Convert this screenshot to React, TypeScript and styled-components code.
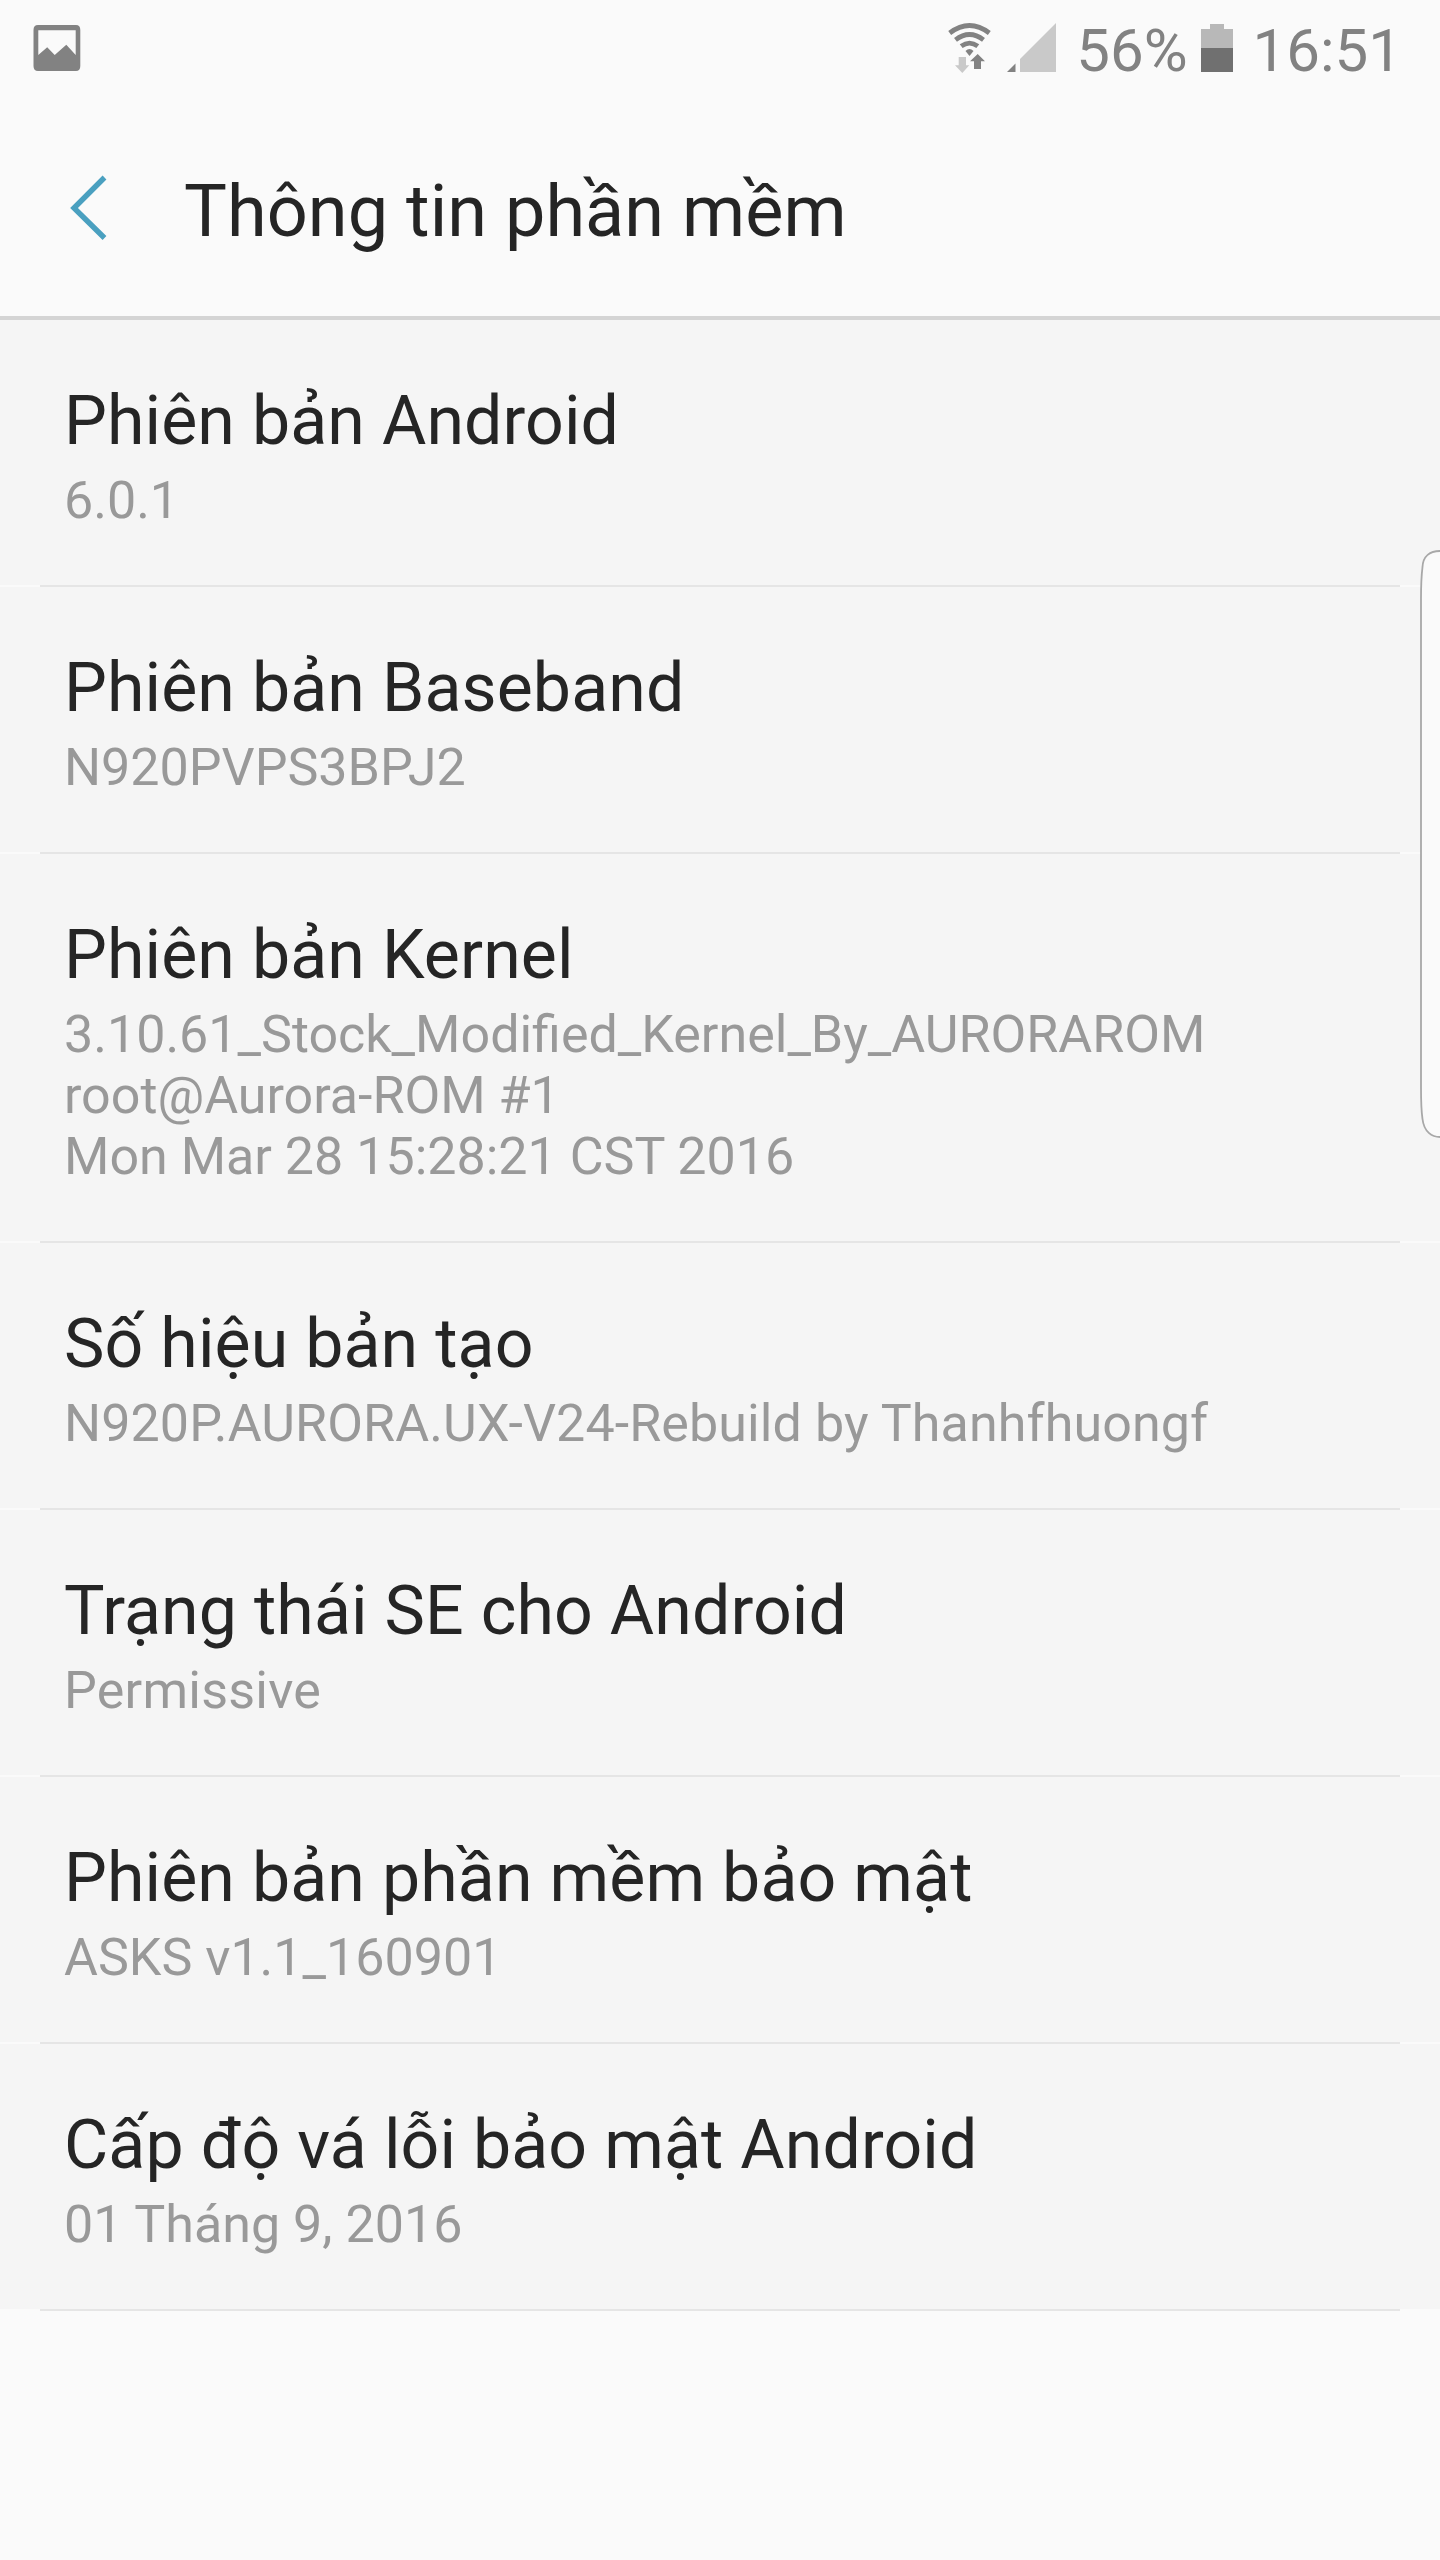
import React from 'react';
import styled, { createGlobalStyle } from 'styled-components';

const GlobalStyle = createGlobalStyle`
  body { margin: 0; background: #fafafa; font-family: Roboto, sans-serif; }
`;

const Screen = styled.div`
  position: relative;
  display: flex;
  flex-direction: column;
  width: 1440px;
  height: 2560px;
  background: #fafafa;
  overflow: hidden;
`;

const StatusBar = styled.header`
  display: flex;
  align-items: flex-start;
  justify-content: space-between;
  height: 96px;
  padding: 0 38px 0 33px;
  box-sizing: border-box;
`;

const StatusGroup = styled.div`
  display: flex;
  align-items: flex-start;
`;

const StatusIcon = styled.svg<{ $top: number; $left?: number }>`
  display: block;
  flex: none;
  margin-top: ${(p) => p.$top}px;
  margin-left: ${(p) => p.$left ?? 0}px;
`;

const StatusText = styled.span<{ $left: number }>`
  margin: 15px 0 0 ${(p) => p.$left}px;
  color: #828282;
  font-size: 60px;
  line-height: 71px;
  white-space: nowrap;
`;

const ActionBar = styled.nav`
  display: flex;
  align-items: flex-start;
  height: 224px;
  box-sizing: border-box;
  border-bottom: 4px solid #d4d4d4;
  padding-left: 70px;
`;

const BackButton = styled.button`
  display: block;
  margin: 79px 0 0;
  padding: 0;
  border: 0;
  background: none;
  line-height: 0;
`;

const PageTitle = styled.h1`
  margin: 73px 0 0 77px;
  color: #252525;
  font-size: 72px;
  font-weight: 400;
  line-height: 85px;
  letter-spacing: 0.05px;
  white-space: nowrap;
`;

const List = styled.main`
  display: flex;
  flex-direction: column;
`;

const Row = styled.section`
  padding: 61px 64px 54px;
  background: #f5f5f5;
`;

const Divider = styled.div`
  height: 2px;
  margin: 0 40px;
  background: #e5e5e5;
`;

const RowTitle = styled.h2`
  margin: 0;
  color: #252525;
  font-size: 68px;
  font-weight: 400;
  line-height: 80px;
  letter-spacing: 0.1px;
  white-space: nowrap;
`;

const RowValue = styled.p<{ $tracking?: number }>`
  margin: 9px 0 0;
  color: #999;
  font-size: 52px;
  line-height: 61px;
  letter-spacing: ${(p) => (p.$tracking ? `${p.$tracking}px` : 'normal')};
  white-space: pre;
`;

const EdgeHandle = styled.svg`
  position: absolute;
  top: 549px;
  right: 0;
`;

interface Item {
  title: string;
  value: string;
  tracking?: number;
}

const items: Item[] = [
  { title: 'Phiên bản Android', value: '6.0.1' },
  { title: 'Phiên bản Baseband', value: 'N920PVPS3BPJ2' },
  {
    title: 'Phiên bản Kernel',
    value: '3.10.61_Stock_Modified_Kernel_By_AURORAROM\nroot@Aurora-ROM #1\nMon Mar 28 15:28:21 CST 2016',
  },
  { title: 'Số hiệu bản tạo', value: 'N920P.AURORA.UX-V24-Rebuild by Thanhfhuongf', tracking: 0.1 },
  { title: 'Trạng thái SE cho Android', value: 'Permissive', tracking: 0.25 },
  { title: 'Phiên bản phần mềm bảo mật', value: 'ASKS v1.1_160901' },
  { title: 'Cấp độ vá lỗi bảo mật Android', value: '01 Tháng 9, 2016' },
];

const PictureIcon = () => (
  <StatusIcon $top={25} width="48" height="46" viewBox="0 0 48 46">
    <path
      fill="#828282"
      fillRule="evenodd"
      d="M5 0H43Q47.300 0 47.300 5V41Q47.300 46 43 46H5Q.5 46 .5 41V5Q.5 0 5 0ZM5.300 5.300V30L14.200 22.300L21.700 30L33.300 19.700L42.700 30V5.300Z"
    />
  </StatusIcon>
);

const WifiIcon = () => (
  <StatusIcon $top={22} width="44" height="52" viewBox="0 0 44 52">
    <g fill="none" stroke="#828282" strokeWidth="4.800">
      <path d="M1.700 11Q21.500-4 41.300 11" />
      <path d="M7.500 17.800Q21.500 7.200 35.500 17.800" />
      <path d="M13.200 24.200Q21.500 18 29.800 24.200" />
    </g>
    <path fill="#828282" d="M17.500 29Q21.500 25.200 25.500 29L21.500 34Z" />
    <path fill="#c9c9c9" d="M10.700 35H18V43.300H21.300L14.300 51L7 43.300H10.700Z" />
    <path fill="#828282" d="M29.700 32L37 39.300H33V47H26V39.300H22Z" />
  </StatusIcon>
);

const SignalIcon = () => (
  <StatusIcon $top={23} $left={15} width="49" height="49" viewBox="0 0 49 49">
    <path fill="#828282" d="M0 49L8.500 40.500V49Z" />
    <path fill="#c9c9c9" d="M13 49V36L49 0V49Z" />
  </StatusIcon>
);

const BatteryIcon = () => (
  <StatusIcon $top={24} $left={13} width="32" height="48" viewBox="0 0 32 48">
    <path fill="#b8b8b8" d="M9 0H23V5H32V24H0V5H9Z" />
    <path fill="#707070" d="M0 24H32V48H0Z" />
  </StatusIcon>
);

export default function App() {
  return (
    <>
      <GlobalStyle />
      <Screen>
        <StatusBar>
          <PictureIcon />
          <StatusGroup>
            <WifiIcon />
            <SignalIcon />
            <StatusText $left={20}>56%</StatusText>
            <BatteryIcon />
            <StatusText $left={20}>16:51</StatusText>
          </StatusGroup>
        </StatusBar>
        <ActionBar>
          <BackButton aria-label="Quay lại">
            <svg width="37" height="66" viewBox="0 0 37 66">
              <path d="M34.500 2.500L4 33L34.500 63" fill="none" stroke="#4aa0c0" strokeWidth="5.400" />
            </svg>
          </BackButton>
          <PageTitle>Thông tin phần mềm</PageTitle>
        </ActionBar>
        <List>
          {items.map((item) => (
            <React.Fragment key={item.title}>
              <Row>
                <RowTitle>{item.title}</RowTitle>
                <RowValue $tracking={item.tracking}>{item.value}</RowValue>
              </Row>
              <Divider />
            </React.Fragment>
          ))}
        </List>
        <EdgeHandle width="20" height="590" viewBox="0 0 20 590">
          <path
            d="M20 2C10 2 3 7 2.500 18Q1 30 1 50V538Q1 560 2.500 570C4 583 12 588 20 588"
            fill="#fafafa"
            stroke="#a8a8a8"
            strokeWidth="1.800"
          />
        </EdgeHandle>
      </Screen>
    </>
  );
}
